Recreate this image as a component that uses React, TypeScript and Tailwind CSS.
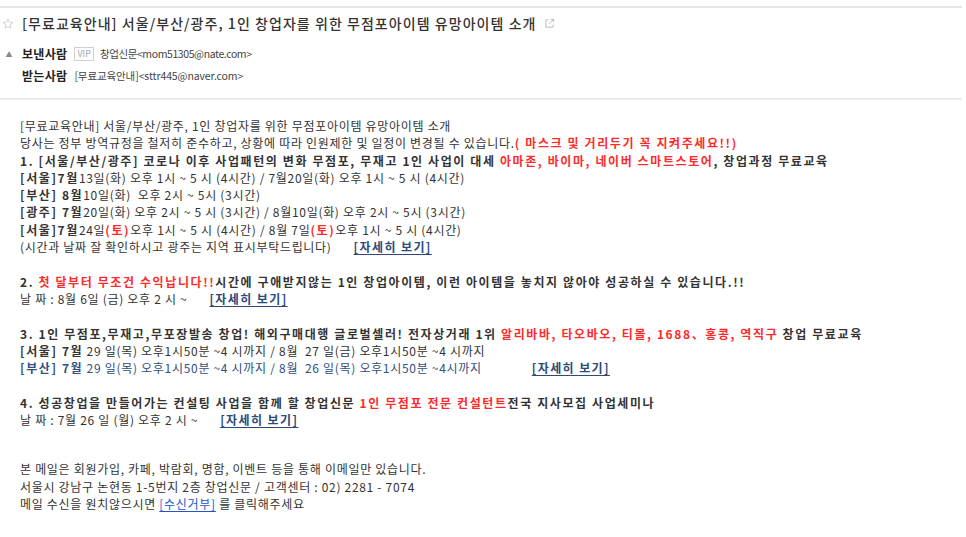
import type { ReactNode } from "react";

const red = "text-[#ff2a2a]";

function More({ className = "" }: { className?: string }) {
  return (
    <span className={`font-bold tracking-[1.4px] text-[#2b4a78] underline underline-offset-2 ${className}`}>
      [자세히 보기]
    </span>
  );
}

function B({ children, className = "" }: { children: ReactNode; className?: string }) {
  return <span className={`font-bold tracking-[1.6px] ${className}`}>{children}</span>;
}

function Line({ children, className = "" }: { children?: ReactNode; className?: string }) {
  return <div className={`h-[17.3px] whitespace-pre ${className}`}>{children}</div>;
}

export default function App() {
  return (
    <div className="w-[966px] h-[537px] overflow-hidden bg-white text-[#333] font-['Noto_Sans_CJK_KR','Noto_Sans',sans-serif] pt-[6px] pr-[4px]">
      <div className="border-t-2 border-[#e6e6e6]" />

      <div className="flex items-center h-[31px]">
        <svg viewBox="0 0 14 14" className="w-[12px] h-[12px] ml-[2px] mr-[8px] text-[#c8c8c8]">
          <path
            d="M7 1.2l1.7 3.6 3.9.5-2.9 2.7.7 3.9L7 10l-3.4 1.9.7-3.9L1.4 5.3l3.9-.5z"
            fill="none"
            stroke="currentColor"
            strokeWidth="1"
            strokeLinejoin="round"
          />
        </svg>
        <span className="text-[14px] text-[#333] font-medium tracking-[1.05px]">
          [무료교육안내] 서울/부산/광주, 1인 창업자를 위한 무점포아이템 유망아이템 소개
        </span>
        <svg viewBox="0 0 12 12" className="w-[11px] h-[11px] ml-[7px] text-[#bbb]">
          <path d="M5 2H2v8h8V7" fill="none" stroke="currentColor" strokeWidth="1" />
          <path d="M7 1.5h3.5V5M10.5 1.5L5.5 6.5" fill="none" stroke="currentColor" strokeWidth="1" />
        </svg>
      </div>

      <div className="mt-[5px] flex items-center h-[20px] text-[10.5px]">
        <span className="w-[12px] h-[10px] ml-[3px] mr-[7px] flex items-center justify-center text-[7px] text-[#888] leading-none">
          ▲
        </span>
        <span className="font-bold text-[12px] text-[#222] tracking-[0.3px]">보낸사람</span>
        <span className="ml-[7px] px-[2px] h-[14px] leading-[12px] border border-[#d0d0d0] text-[#aaa] text-[9px]">
          VIP
        </span>
        <span className="ml-[6px] text-[#444] tracking-[-0.4px]">창업신문&lt;mom51305@nate.com&gt;</span>
      </div>
      <div className="mt-[2px] flex items-center h-[20px] text-[10.5px] pl-[22px]">
        <span className="font-bold text-[12px] text-[#222] tracking-[0.3px]">받는사람</span>
        <span className="ml-[7px] text-[#444] tracking-[-0.1px]">[무료교육안내]&lt;sttr445@naver.com&gt;</span>
      </div>

      <div className="mt-[12px] border-t-2 border-[#ebebeb]" />

      <div className="pl-[20px] pt-[17px] text-[12px] leading-[17.3px] tracking-[0.7px] text-[#333]">
        <Line>[무료교육안내] 서울/부산/광주, 1인 창업자를 위한 무점포아이템 유망아이템 소개</Line>
        <Line>
          당사는 정부 방역규정을 철저히 준수하고, 상황에 따라 인원제한 및 일정이 변경될 수 있습니다.
          <B className={red}>( 마스크 및 거리두기 꼭 지켜주세요!!)</B>
        </Line>
        <Line>
          <B>
            1. [서울/부산/광주] 코로나 이후 사업패턴의 변화 무점포, 무재고 1인 사업이 대세{" "}
            <span className={red}>아마존, 바이마, 네이버 스마트스토어</span>, 창업과정 무료교육
          </B>
        </Line>
        <Line>
          <B>[서울]7월</B>13일(화) 오후 1시 ~ 5 시 (4시간) / 7월20일(화) 오후 1시 ~ 5 시 (4시간)
        </Line>
        <Line>
          <B>[부산] 8월</B>10일(화)  오후 2시 ~ 5시 (3시간)
        </Line>
        <Line>
          <B>[광주] 7월</B>20일(화) 오후 2시 ~ 5 시 (3시간) / 8월10일(화) 오후 2시 ~ 5시 (3시간)
        </Line>
        <Line>
          <B>[서울]7월</B>24일<B className={red}>(토)</B>오후 1시 ~ 5 시 (4시간) / 8월 7일<B className={red}>(토)</B>오후 1시 ~ 5 시 (4시간)
        </Line>
        <Line>
          (시간과 날짜 잘 확인하시고 광주는 지역 표시부탁드립니다)
          <More className="ml-[22px]" />
        </Line>
        <Line />
        <Line>
          <B>
            2. <span className={red}>첫 달부터 무조건 수익납니다!!</span>시간에 구애받지않는 1인 창업아이템, 이런 아이템을 놓치지 않아야 성공하실 수 있습니다.!!
          </B>
        </Line>
        <Line>
          날 짜 : 8월 6일 (금) 오후 2 시 ~
          <More className="ml-[22px]" />
        </Line>
        <Line />
        <Line>
          <B>
            3. 1인 무점포,무재고,무포장발송 창업! 해외구매대행 글로벌셀러! 전자상거래 1위{" "}
            <span className={red}>알리바바, 타오바오, 티몰, 1688、홍콩, 역직구</span> 창업 무료교육
          </B>
        </Line>
        <Line>
          <B>[서울] 7월</B> 29 일(목) 오후1시50분 ~4 시까지 / 8월  27 일(금) 오후1시50분 ~4 시까지
        </Line>
        <Line className="text-[#2f5080]">
          <B>[부산] 7월</B> 29 일(목) 오후1시50분 ~4 시까지 / 8월  26 일(목) 오후1시50분 ~4시까지
          <More className="ml-[50px]" />
        </Line>
        <Line />
        <Line>
          <B>
            4. 성공창업을 만들어가는 컨설팅 사업을 함께 할 창업신문{" "}
            <span className={red}>1인 무점포 전문 컨설턴트</span>전국 지사모집 사업세미나
          </B>
        </Line>
        <Line>
          날 짜 : 7월 26 일 (월) 오후 2 시 ~
          <More className="ml-[22px]" />
        </Line>
        <div className="h-[32px]" />
        <Line>본 메일은 회원가입, 카페, 박람회, 명함, 이벤트 등을 통해 이메일만 있습니다.</Line>
        <Line>서울시 강남구 논현동 1-5번지 2층 창업신문 / 고객센터 : 02) 2281 - 7074</Line>
        <Line>
          메일 수신을 원치않으시면 <span className="text-[#2255cc] underline underline-offset-2">[수신거부]</span> 를 클릭해주세요
        </Line>
      </div>
    </div>
  );
}
